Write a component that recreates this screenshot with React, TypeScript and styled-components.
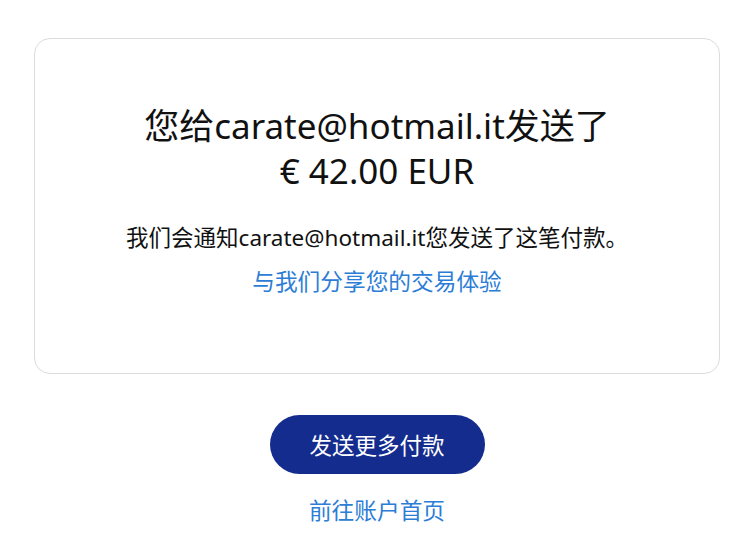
import React from "react";
import styled, { createGlobalStyle } from "styled-components";

const GlobalStyle = createGlobalStyle`
  html, body {
    margin: 0;
    padding: 0;
    background: #ffffff;
  }
  body {
    font-family: "Noto Sans", "Noto Sans CJK SC", sans-serif;
    color: #111111;
  }
`;

const Page = styled.main`
  width: 686px;
  margin-left: 34px;
  padding-top: 38px;
  display: flex;
  flex-direction: column;
  align-items: center;
`;

const Card = styled.section`
  box-sizing: border-box;
  width: 100%;
  height: 336px;
  border: 1px solid #dcdcdc;
  border-radius: 16px;
  padding: 64px 20px 0;
  display: flex;
  flex-direction: column;
  align-items: center;
  text-align: center;
`;

const Title = styled.h1`
  margin: 0;
  font-size: 35px;
  line-height: 45px;
  font-weight: 400;
  color: #111111;
`;

const Message = styled.p`
  margin: 30px 0 0;
  font-size: 22.5px;
  line-height: 30px;
  color: #111111;
`;

const TextLink = styled.a<{ $gap: number }>`
  display: block;
  margin-top: ${(p) => p.$gap}px;
  font-size: 22.7px;
  line-height: 30px;
  color: #2c7dd6;
  text-decoration: none;
  cursor: pointer;
`;

const PrimaryButton = styled.button`
  margin-top: 41px;
  width: 215px;
  height: 59px;
  border: none;
  border-radius: 30px;
  background: #142c8e;
  color: #ffffff;
  font-family: "Noto Sans", "Noto Sans CJK SC", sans-serif;
  font-size: 22.5px;
  cursor: pointer;
`;

export default function App() {
  return (
    <>
      <GlobalStyle />
      <Page>
        <Card>
          <Title>
            您给carate@hotmail.it发送了
            <br />€ 42.00 EUR
          </Title>
          <Message>我们会通知carate@hotmail.it您发送了这笔付款。</Message>
          <TextLink $gap={14}>与我们分享您的交易体验</TextLink>
        </Card>
        <PrimaryButton>发送更多付款</PrimaryButton>
        <TextLink $gap={22}>前往账户首页</TextLink>
      </Page>
    </>
  );
}
